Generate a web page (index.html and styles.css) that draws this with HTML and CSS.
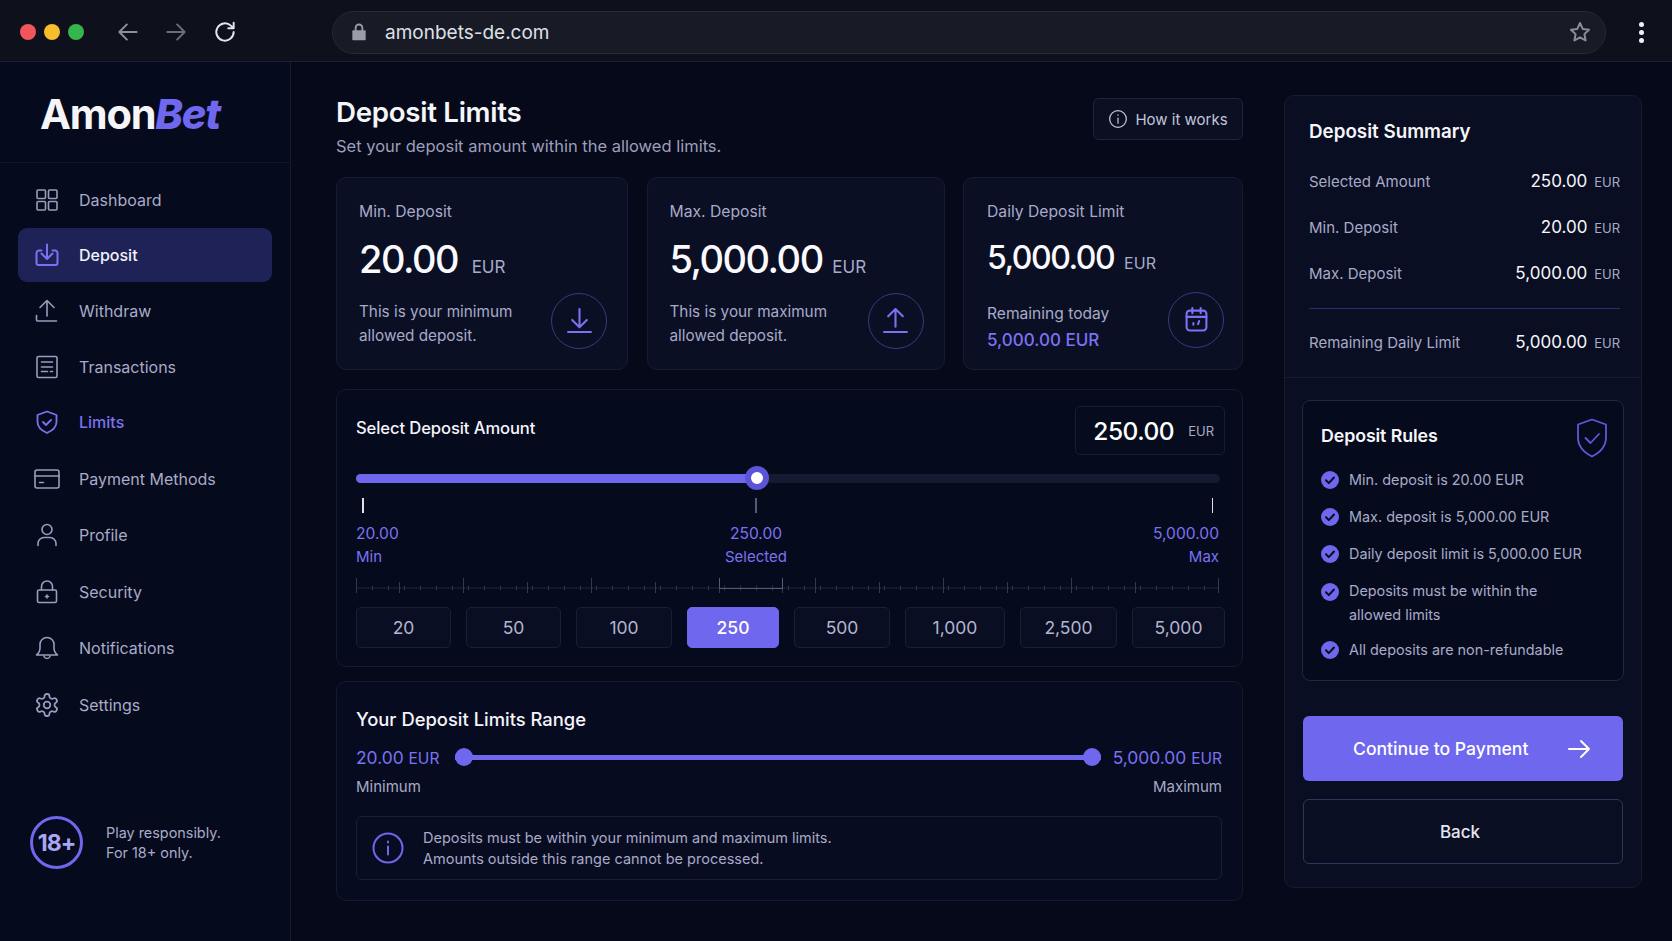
FILE: index.html
```html
<!DOCTYPE html>
<html lang="en">
<head>
<meta charset="utf-8">
<title>Deposit Limits</title>
<link rel="stylesheet" href="styles.css">
</head>
<body>
<header class="topbar">
  <div class="lights"><span class="light red"></span><span class="light yellow"></span><span class="light green"></span></div>
  <div class="navbtns">
    <svg class="tb-icon" viewBox="0 0 24 24"><path d="M20 12H4M11 5l-7 7 7 7"/></svg>
    <svg class="tb-icon dim" viewBox="0 0 24 24"><path d="M4 12h16M13 5l7 7-7 7"/></svg>
    <svg class="tb-icon bright" viewBox="0 0 24 24"><path d="M20 12a8 8 0 1 1-2.600-5.900L20 8.500M20 3.500v5h-5"/></svg>
  </div>
  <div class="url">
    <svg class="lock" viewBox="0 0 24 24"><path class="lock-body" d="M5 10h14a1 1 0 0 1 1 1v10a1 1 0 0 1-1 1H5a1 1 0 0 1-1-1V11a1 1 0 0 1 1-1z"/><path class="lock-arc" d="M8 10V7a4 4 0 0 1 8 0v3"/></svg>
    <span class="url-text">amonbets-de.com</span>
    <svg class="star" viewBox="0 0 24 24"><path d="M12 3l2.700 5.900 6.300.8-4.600 4.400 1.200 6.400L12 17.300l-5.600 3.200 1.200-6.400L3 9.700l6.300-.8z"/></svg>
  </div>
  <div class="kebab"><i></i><i></i><i></i></div>
</header>

<div class="app">
  <aside class="sidebar">
    <div class="logo">Amon<em>Bet</em></div>
    <nav class="nav">
      <a class="nav-item"><svg viewBox="0 0 24 24"><rect x="2" y="2" width="8.500" height="8.500" rx="1"/><rect x="13.500" y="2" width="8.500" height="8.500" rx="1"/><rect x="2" y="13.500" width="8.500" height="8.500" rx="1"/><rect x="13.500" y="13.500" width="8.500" height="8.500" rx="1"/></svg>Dashboard</a>
      <a class="nav-item active"><svg viewBox="0 0 24 24"><path d="M6.500 7.500H3.500c-1 .3-2 1-2 2.500v10a2 2 0 0 0 2 2h17a2 2 0 0 0 2-2V10c0-1.500-1-2.200-2-2.500h-3M12 1.500V16M6.500 10.500L12 16l5.500-5.500"/></svg>Deposit</a>
      <a class="nav-item"><svg viewBox="0 0 24 24"><path d="M12 17V1.500M5 8.500l7-7 7 7M1.500 16.500V21a1 1 0 0 0 1 1h19"/></svg>Withdraw</a>
      <a class="nav-item"><svg viewBox="0 0 24 24"><rect x="2" y="1.500" width="20" height="21" rx="1.500"/><path d="M6.500 7h11M6.500 12h11M6.500 16.500h6M15.500 16.500h2"/></svg>Transactions</a>
      <a class="nav-item limit"><svg viewBox="0 0 24 24"><path d="M12 1.500l9.500 3.500v7c0 5-4 8.500-9.500 11-5.500-2.500-9.500-6-9.500-11V5z"/><path d="M8 12l3 3 5-5"/></svg>Limits</a>
      <a class="nav-item low"><svg class="wide" viewBox="0 0 26 24"><rect x="1" y="3" width="24" height="18" rx="2"/><path d="M1 9h24M5.500 15.500h4"/></svg>Payment Methods</a>
      <a class="nav-item"><svg viewBox="0 0 24 24"><circle cx="12" cy="6.500" r="5"/><path d="M3 22.500v-2a6 6 0 0 1 6-6h6a6 6 0 0 1 6 6v2"/></svg>Profile</a>
      <a class="nav-item"><svg viewBox="0 0 24 24"><rect x="2.500" y="10" width="19" height="12.500" rx="1.500"/><path d="M6.500 10V6.500a5.500 5.500 0 0 1 11 0V10M12 15v3M10.500 16.500h3"/></svg>Security</a>
      <a class="nav-item"><svg viewBox="0 0 24 24"><path d="M1.500 19c2-1.500 3.500-3.500 3.500-7V8.500a7 7 0 0 1 14 0V12c0 3.500 1.500 5.500 3.500 7zM9 20.500c.6 1.300 1.700 2 3 2s2.400-.7 3-2"/></svg>Notifications</a>
      <a class="nav-item"><svg viewBox="0 0 24 24"><g transform="translate(-1.200 -1.200) scale(1.100)"><path d="M12.220 2h-.44a2 2 0 0 0-2 2v.18a2 2 0 0 1-1 1.730l-.43.25a2 2 0 0 1-2 0l-.15-.08a2 2 0 0 0-2.730.73l-.22.38a2 2 0 0 0 .73 2.730l.15.1a2 2 0 0 1 1 1.720v.51a2 2 0 0 1-1 1.740l-.15.09a2 2 0 0 0-.73 2.730l.22.38a2 2 0 0 0 2.730.73l.15-.08a2 2 0 0 1 2 0l.43.25a2 2 0 0 1 1 1.730V20a2 2 0 0 0 2 2h.44a2 2 0 0 0 2-2v-.18a2 2 0 0 1 1-1.730l.43-.25a2 2 0 0 1 2 0l.15.08a2 2 0 0 0 2.730-.73l.22-.39a2 2 0 0 0-.73-2.730l-.15-.08a2 2 0 0 1-1-1.740v-.5a2 2 0 0 1 1-1.740l.15-.09a2 2 0 0 0 .73-2.730l-.22-.38a2 2 0 0 0-2.730-.73l-.15.08a2 2 0 0 1-2 0l-.43-.25a2 2 0 0 1-1-1.730V4a2 2 0 0 0-2-2z"/><circle cx="12" cy="12" r="3"/></g></svg>Settings</a>
    </nav>
    <div class="age">
      <div class="age-badge">18+</div>
      <p>Play responsibly.<br>For 18+ only.</p>
    </div>
  </aside>

  <main class="content">
    <div class="page-head">
      <div>
        <h1>Deposit Limits</h1>
        <p class="sub">Set your deposit amount within the allowed limits.</p>
      </div>
      <button class="how"><svg viewBox="0 0 24 24"><circle cx="12" cy="12" r="10"/><path d="M12 11v6M12 7v.5"/></svg>How it works</button>
    </div>

    <section class="cards">
      <div class="card">
        <div class="card-label">Min. Deposit</div>
        <div class="card-value">20.00 <small>EUR</small></div>
        <div class="card-foot">
          <p>This is your minimum<br>allowed deposit.</p>
          <span class="circle"><svg viewBox="0 0 24 24"><path d="M12 1v17M5 11.500l7 7 7-7M1 23h22"/></svg></span>
        </div>
      </div>
      <div class="card second">
        <div class="card-label">Max. Deposit</div>
        <div class="card-value">5,000.00 <small>EUR</small></div>
        <div class="card-foot">
          <p>This is your maximum<br>allowed deposit.</p>
          <span class="circle"><svg viewBox="0 0 24 24"><path d="M12 18V1M5 8l7-7 7 7M1 23h22"/></svg></span>
        </div>
      </div>
      <div class="card third">
        <div class="card-label">Daily Deposit Limit</div>
        <div class="card-value">5,000.00 <small>EUR</small></div>
        <div class="card-foot">
          <p>Remaining today<br><b>5,000.00 EUR</b></p>
          <span class="circle"><svg viewBox="0 0 24 24"><rect x="2.500" y="3.500" width="19" height="19" rx="3"/><path d="M2.500 9.500h19M8 1v5M16 1v5M9 15.500v1.500M14.500 13.500l-1 3"/></svg></span>
        </div>
      </div>
    </section>

    <section class="panel select">
      <div class="select-head">
        <h2>Select Deposit Amount</h2>
        <div class="amount"><strong>250.00</strong><span>EUR</span></div>
      </div>
      <div class="slider">
        <div class="track"><div class="fill" style="width:46.400%"></div><div class="thumb" style="left:46.400%"></div></div>
      </div>
      <div class="scale ticks">
        <i class="tick start"></i><i class="tick mid"></i><i class="tick end"></i>
      </div>
      <div class="scale values">
        <div>20.00</div><div class="c">250.00</div><div class="r">5,000.00</div>
      </div>
      <div class="scale names">
        <div>Min</div><div class="c">Selected</div><div class="r">Max</div>
      </div>
      <svg class="ruler" viewBox="0 0 863 15">
        <line class="ruler-base" x1="0" y1="10" x2="863" y2="10"/>
        <line class="ruler-minor" x1="0" y1="10" x2="863" y2="10"/>
        <path class="ruler-major" d="M.5 0v15M43.500 4v11M107.500 0v15M171.500 4v11M235.500 0v15M299.500 4v11M363.500 0v15M426.500 4v11M459.500 0v15M523.500 4v11M587.500 0v15M651.500 4v11M715.500 0v15M779.500 4v11M862.500 0v15"/>
        <path class="ruler-hi" d="M363.500 0v10.500H426.500V0"/>
      </svg>
      <div class="presets">
        <button>20</button><button>50</button><button>100</button><button class="on">250</button><button>500</button><button>1,000</button><button>2,500</button><button>5,000</button>
      </div>
    </section>

    <section class="panel range">
      <h3>Your Deposit Limits Range</h3>
      <div class="range-row">
        <span class="rv">20.00 <span>EUR</span></span>
        <div class="range-track"><i></i><i></i></div>
        <span class="rv">5,000.00 <span>EUR</span></span>
      </div>
      <div class="range-names"><span>Minimum</span><span>Maximum</span></div>
      <div class="notice">
        <svg viewBox="0 0 32 32"><circle cx="16" cy="16" r="14.500"/><path d="M16 14.500v8M16 9.500v1"/></svg>
        <p>Deposits must be within your minimum and maximum limits.<br>Amounts outside this range cannot be processed.</p>
      </div>
    </section>
  </main>

  <aside class="summary">
    <div class="sum-top">
      <h2>Deposit Summary</h2>
      <div class="sum-row first"><span>Selected Amount</span><b>250.00 <small>EUR</small></b></div>
      <div class="sum-row"><span>Min. Deposit</span><b>20.00 <small>EUR</small></b></div>
      <div class="sum-row"><span>Max. Deposit</span><b>5,000.00 <small>EUR</small></b></div>
      <div class="sum-div"></div>
      <div class="sum-row last"><span>Remaining Daily Limit</span><b>5,000.00 <small>EUR</small></b></div>
    </div>
    <div class="sum-body">
      <div class="rules">
        <div class="rules-head">
          <h3>Deposit Rules</h3>
          <svg viewBox="0 0 32 40"><path d="M16 1.500l14 5v13c0 9-6 15-14 19-8-4-14-10-14-19v-13z"/><path d="M9.500 20l5 5 8.500-9"/></svg>
        </div>
        <ul>
          <li><svg viewBox="0 0 18 18"><circle cx="9" cy="9" r="9"/><path d="M5 9.300l2.800 2.800L13 6.500"/></svg>Min. deposit is 20.00 EUR</li>
          <li><svg viewBox="0 0 18 18"><circle cx="9" cy="9" r="9"/><path d="M5 9.300l2.800 2.800L13 6.500"/></svg>Max. deposit is 5,000.00 EUR</li>
          <li><svg viewBox="0 0 18 18"><circle cx="9" cy="9" r="9"/><path d="M5 9.300l2.800 2.800L13 6.500"/></svg>Daily deposit limit is 5,000.00 EUR</li>
          <li class="two"><svg viewBox="0 0 18 18"><circle cx="9" cy="9" r="9"/><path d="M5 9.300l2.800 2.800L13 6.500"/></svg><span>Deposits must be within the<br>allowed limits</span></li>
          <li><svg viewBox="0 0 18 18"><circle cx="9" cy="9" r="9"/><path d="M5 9.300l2.800 2.800L13 6.500"/></svg>All deposits are non-refundable</li>
        </ul>
      </div>
      <button class="continue">Continue to Payment<svg viewBox="0 0 24 24"><path d="M2 12h20M14 4l8 8-8 8"/></svg></button>
      <button class="back">Back</button>
    </div>
  </aside>
</div>
</body>
</html>
```

FILE: styles.css
```css
* { box-sizing: border-box; }
html, body { margin: 0; height: 941px; overflow: hidden; }
body {
  background: #050919;
  color: #fff;
  font-family: Inter, "Liberation Sans", sans-serif;
  display: flex;
  flex-direction: column;
}
h1, h2, h3, p, ul { margin: 0; padding: 0; }
svg { fill: none; stroke: currentColor; stroke-linecap: round; stroke-linejoin: round; flex: none; }

/* browser bar */
.topbar {
  height: 62px;
  flex: none;
  display: flex;
  align-items: center;
  background: #0e101b;
  border-bottom: 1px solid #1b1f33;
  padding: 3px 0 0 20px;
}
.lights { display: flex; gap: 8px; width: 95px; }
.light { width: 16px; height: 16px; border-radius: 50%; }
.red { background: #f0565a; }
.yellow { background: #f7bd2e; }
.green { background: #35b54a; }
.navbtns { display: flex; align-items: center; gap: 22px; width: 217px; color: #8d8f9b; }
.tb-icon { width: 26px; height: 26px; stroke-width: 1.800; }
.tb-icon.dim { color: #6a6c78; }
.tb-icon.bright { color: #e4e5ea; margin-left: 1px; }
.url {
  width: 1274px;
  height: 43px;
  display: flex;
  align-items: center;
  background: #181b25;
  border: 1px solid #262a38;
  border-radius: 22px;
  padding: 0 13px 0 16px;
}
.lock { width: 20px; height: 22px; color: #9a9ca6; }
.lock-body { fill: currentColor; stroke: none; }
.lock-arc { stroke-width: 2.200; }
.url-text { margin-left: 16px; font-size: 19px; color: #dfe0e6; }
.star { width: 24px; height: 24px; margin-left: auto; color: #8b8d98; stroke-width: 2; }
.kebab { display: flex; flex-direction: column; gap: 3px; margin-left: 33px; }
.kebab i { width: 5px; height: 5px; border-radius: 50%; background: #f0f0f4; }

.app { flex: 1; display: flex; min-height: 0; }

/* sidebar */
.sidebar {
  width: 291px;
  flex: none;
  display: flex;
  flex-direction: column;
  border-right: 1px solid #141a30;
  background: #050a1c;
}
.logo {
  height: 101px;
  flex: none;
  display: flex;
  align-items: center;
  padding: 3px 0 0 40px;
  font-size: 41.500px;
  font-weight: 700;
  letter-spacing: -1.200px;
  border-bottom: 1px solid #10152a;
  color: #f5f5f8;
}
.logo em { color: #6f67ee; font-weight: 800; }
.nav { display: flex; flex-direction: column; gap: 1.500px; padding: 10px 18px 0; }
.nav-item {
  height: 54px;
  display: flex;
  align-items: center;
  gap: 20px;
  padding-left: 17px;
  border-radius: 9px;
  font-size: 16px;
  color: #a9abc9;
}
.nav-item svg { width: 24px; height: 24px; stroke-width: 1.600; color: #9a9dbd; }
.nav-item svg.wide { width: 26px; height: 24px; margin: 0 -1px; }
.nav-item.active { margin: -1px 0 1px; background: #1f2256; color: #f2f2fa; font-weight: 500; }
.nav-item.active svg { color: #7a72f2; stroke-width: 2; }
.nav-item.limit { color: #7a72f2; font-weight: 500; }
.nav-item.limit svg { color: #7a72f2; stroke-width: 1.800; }
.nav-item.low { margin-top: 1px; }
.nav-item.low ~ .nav-item { margin-top: 1px; }
.age { margin-top: auto; display: flex; align-items: center; gap: 23px; padding: 0 0 72px 30px; }
.age-badge {
  width: 53px;
  height: 53px;
  border: 3px solid #6f67ee;
  border-radius: 50%;
  display: flex;
  align-items: center;
  justify-content: center;
  font-size: 23px;
  font-weight: 700;
  color: #a8a6f5;
  letter-spacing: -1px;
}
.age p { font-size: 14.400px; line-height: 20px; color: #a9abc9; }

/* main */
.content { width: 952px; flex: none; padding: 35px 0 0 45px; display: flex; flex-direction: column; }
.page-head { display: flex; justify-content: space-between; align-items: flex-start; }
h1 { font-size: 27.700px; line-height: 30px; font-weight: 600; letter-spacing: -.300px; color: #f6f6fa; }
.sub { margin-top: 8px; font-size: 16.500px; line-height: 22px; color: #9d9fbc; }
.how {
  width: 150px;
  height: 42px;
  margin-top: 1px;
  display: flex;
  align-items: center;
  justify-content: center;
  gap: 7px;
  background: #0a0f22;
  border: 1px solid #1f2439;
  border-radius: 6px;
  color: #c4c6dc;
  font: 15px Inter, sans-serif;
}
.how svg { width: 20px; height: 20px; stroke-width: 1.500; }

.cards { display: grid; grid-template-columns: 292fr 298fr 280fr; gap: 18.500px; margin-top: 20px; }
.card {
  height: 193px;
  padding: 22px 20px 0 22px;
  background: #0a0f24;
  border: 1px solid #171c33;
  border-radius: 10px;
  display: flex;
  flex-direction: column;
}
.card-label { font-size: 15.700px; line-height: 24px; color: #a8aac8; }
.card-value { margin-top: 13px; font-size: 38px; line-height: 44px; font-weight: 500; letter-spacing: -1.500px; color: #fafafe; }
.card-value small { margin-left: 5px; font-size: 17px; font-weight: 400; letter-spacing: 0; color: #a8aac8; }
.second .card-value small { margin-left: 1px; }
.card-foot { margin-top: 3.500px; display: flex; justify-content: space-between; align-items: center; }
.card-foot p { padding-top: 6px; font-size: 15.300px; line-height: 24px; color: #a8aac8; }
.card-foot b { font-weight: 500; color: #7a72f2; font-size: 17px; line-height: 28px; }
.circle {
  width: 56px;
  height: 56px;
  border: 1px solid #3a3a80;
  border-radius: 50%;
  display: flex;
  align-items: center;
  justify-content: center;
  color: #7a72f2;
}
.circle svg { width: 25px; height: 25px; stroke-width: 2; }
.third { padding: 22px 18px 0 23px; }
.third .card-value { font-size: 32px; letter-spacing: -1.500px; margin-top: 12px; }
.third .card-value small { font-size: 16px; margin-left: 3px; }
.third .card-foot { margin-top: 5.500px; }
.third .card-foot p { font-size: 15.600px; transform: translateY(5px); }

.panel { background: #060a1d; border: 1px solid #141a30; border-radius: 10px; }
.select { margin-top: 19px; height: 278px; padding: 16px 17px 0 19px; }
.select-head { display: flex; justify-content: space-between; align-items: center; height: 49px; }
.select-head h2 { padding-bottom: 6px; font-size: 16.600px; font-weight: 500; color: #f4f4fa; letter-spacing: -.100px; }
.amount {
  width: 150px;
  height: 49px;
  display: flex;
  align-items: center;
  justify-content: flex-end;
  gap: 14px;
  padding-right: 10px;
  background: #070b1e;
  border: 1px solid #181d33;
  border-radius: 5px;
}
.amount strong { font-size: 24.500px; font-weight: 500; letter-spacing: -.500px; color: #fff; }
.amount span { font-size: 13px; color: #a8aac8; }

.slider { margin: 11px 5px 0 0; height: 24px; display: flex; align-items: center; }
.track { position: relative; flex: 1; height: 9px; border-radius: 5px; background: #161a30; }
.fill { height: 100%; border-radius: 5px; background: #6f67ee; }
.thumb {
  position: absolute;
  top: 50%;
  width: 24px;
  height: 24px;
  margin: -12px 0 0 -12px;
  border-radius: 50%;
  background: #fff;
  border: 6px solid #5b54d6;
}
.scale { display: grid; grid-template-columns: 324px 152px 1fr; margin-right: 6px; }
.scale .c { text-align: center; }
.scale .r { text-align: right; }
.ticks { margin-top: 8px; height: 15px; }
.tick { display: block; width: 1.500px; height: 15px; background: #565a78; }
.tick.start { background: #dfe0ea; margin-left: 6px; }
.tick.mid { justify-self: center; }
.tick.end { background: #dfe0ea; justify-self: end; margin-right: 6px; }
.values { margin-top: 9.500px; font-size: 15.600px; line-height: 22px; color: #7a72f2; }
.names { margin-top: 1.500px; font-size: 15px; line-height: 22px; color: #7a72f2; }
.ruler { display: block; width: 863px; height: 15px; margin-top: 10px; }
.ruler-base { stroke: #20243c; stroke-width: 1; }
.ruler-minor { stroke: #2c3048; stroke-width: 5; stroke-dasharray: 1 15; stroke-linecap: butt; }
.ruler-major { stroke: #343852; stroke-width: 1; stroke-linecap: butt; }
.ruler-hi { stroke: #565a78; stroke-width: 1; stroke-linecap: butt; }
.presets {
  margin-top: 14px;
  display: grid;
  grid-template-columns: 95px 95px 96px 92px 96px 100px 97px 93px;
  gap: 15px;
}
.presets button {
  height: 41px;
  background: #0a0e22;
  border: 1px solid #1a1f36;
  border-radius: 5px;
  color: #b3b5d1;
  font: 17.500px Inter, sans-serif;
}
.presets button.on { background: #6f67ee; border-color: #6f67ee; color: #fff; font-weight: 500; }

.range { margin-top: 14px; height: 220px; padding: 24px 20px 0 19px; background: #070b1f; }
.range h3 { font-size: 18.400px; line-height: 26px; font-weight: 500; color: #f4f4fa; }
.range-row { margin-top: 13px; height: 24px; display: flex; align-items: center; gap: 13px; }
.rv { font-size: 17.400px; color: #7a72f2; white-space: nowrap; }
.rv span { font-size: 15.500px; }
.range-track {
  flex: 1;
  height: 5px;
  margin: 0 -1px 0 3px;
  background: #6f67ee;
  display: flex;
  justify-content: space-between;
  align-items: center;
}
.range-track i { width: 18px; height: 18px; border-radius: 50%; background: #6f67ee; }
.range-names { margin-top: 8px; display: flex; justify-content: space-between; font-size: 15px; line-height: 20px; color: #a8aac8; }
.notice {
  margin-top: 19px;
  height: 64px;
  display: flex;
  align-items: center;
  gap: 19px;
  padding-left: 15px;
  border: 1px solid #1a1f36;
  border-radius: 6px;
  background: #080c20;
}
.notice svg { width: 32px; height: 32px; color: #6f67ee; stroke-width: 2; }
.notice p { font-size: 14.500px; line-height: 21.500px; color: #a8aac8; }

/* summary */
.summary {
  margin: 33px 0 0 41px;
  width: 358px;
  height: 793px;
  flex: none;
  background: #090e22;
  border: 1px solid #151a30;
  border-radius: 10px;
}
.sum-top { padding: 22px 21px 0 24px; height: 282px; border-bottom: 1px solid #171c32; }
.sum-top h2 { font-size: 18.800px; line-height: 28px; font-weight: 600; color: #f6f6fa; }
.sum-row { height: 46px; display: flex; justify-content: space-between; align-items: center; font-size: 15px; color: #a8aac8; }
.sum-row.first { margin-top: 12px; }
.sum-row.last { margin-top: 10px; }
.sum-row b { font-size: 17px; font-weight: 400; color: #f6f6fa; }
.sum-row small { margin-left: 2px; font-size: 13px; color: #a8aac8; }
.sum-div { margin-top: 12px; height: 1px; background: #2c2c6e; }
.sum-body { padding: 22px 17px 0 18px; }
.rules {
  height: 281px;
  margin-left: -1px;
  padding: 21px 15px 0 18px;
  background: #060a1d;
  border: 1px solid #22273f;
  border-radius: 8px;
}
.rules-head { display: flex; justify-content: space-between; align-items: center; height: 26px; }
.rules-head h3 { font-size: 17.800px; font-weight: 600; color: #f6f6fa; letter-spacing: -.100px; }
.rules-head svg { width: 32px; height: 40px; color: #5f58d8; stroke-width: 1.800; margin-top: 6px; }
.rules ul { list-style: none; margin-top: 20px; display: flex; flex-direction: column; gap: 13px; }
.rules li { display: flex; align-items: center; gap: 10px; font-size: 14.400px; line-height: 24px; color: #a8aac8; white-space: nowrap; }
.rules li svg { width: 18px; height: 18px; }
.rules li svg circle { fill: #6f67ee; stroke: none; }
.rules li svg path { stroke: #0a0e22; stroke-width: 2; }
.rules li.two { align-items: flex-start; margin-bottom: -2px; }
.rules li.two svg { margin-top: 4px; }
.continue {
  margin-top: 35px;
  width: 320px;
  height: 65px;
  display: flex;
  align-items: center;
  justify-content: space-between;
  padding: 0 32px 0 50px;
  background: #6f67ee;
  border: 0;
  border-radius: 6px;
  color: #fff;
  font: 500 17.600px Inter, sans-serif;
}
.continue svg { width: 24px; height: 24px; stroke-width: 2; }
.back {
  margin-top: 18px;
  width: 320px;
  height: 65px;
  padding-right: 12px;
  background: transparent;
  border: 1px solid #30365a;
  border-radius: 6px;
  color: #e6e6f0;
  font: 500 17px Inter, sans-serif;
}
```
